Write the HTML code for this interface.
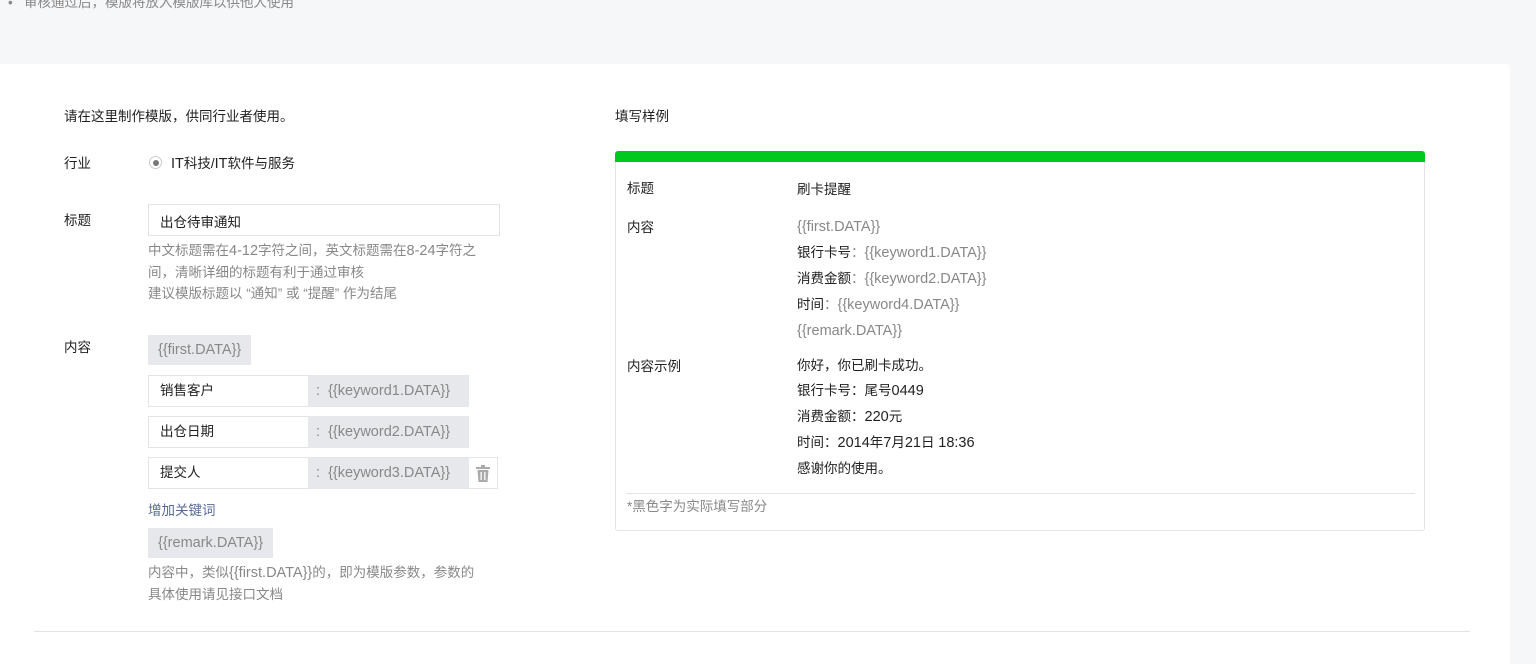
<!DOCTYPE html>
<html><head><meta charset="utf-8"><style>
*{margin:0;padding:0;box-sizing:border-box}
body{width:1536px;height:652px;background:#f6f7f9;font-family:"Liberation Sans","Noto Sans CJK SC",sans-serif;font-size:13.5px;color:#222;position:relative;overflow:hidden}
.a{position:absolute;white-space:nowrap}
.g{color:#888}
.L{font-size:14.5px}
.panel{position:absolute;left:0;top:64px;width:1510px;height:600px;background:#fff;border-radius:0 4px 0 0}
.box{position:absolute;border:1px solid #e4e4e4;background:#fff}
.tag{position:absolute;background:#e7e8eb;color:#888;padding:0 10px;height:30px;line-height:30px;font-size:14.5px}
.kw{position:absolute;left:148px;width:320px;height:32px;border:1px solid #e4e4e4;background:#fff}
.kw span.n{position:absolute;left:11px;top:0;line-height:30px;color:#222}
.kw span.v{position:absolute;left:159px;top:-1px;width:161px;height:32px;background:#e7e8eb;color:#888;line-height:32px;padding-left:8px;font-size:14.5px}
</style></head><body>
<div class="a g" style="left:8px;top:-9px">•&nbsp;&nbsp; 审核通过后，模版将放入模版库以供他人使用</div>
<div class="panel"></div>
<div class="a" style="left:64px;top:105px">请在这里制作模版，供同行业者使用。</div>
<div class="a" style="left:64px;top:152px">行业</div>
<div class="a" style="left:149px;top:156px;width:13px;height:13px;border:1px solid #ccc;border-radius:50%"><div style="position:absolute;left:2.5px;top:2.5px;width:6px;height:6px;border-radius:50%;background:#777"></div></div>
<div class="a" style="left:171px;top:152px"><span class="L">IT</span>科技/<span class="L">IT</span>软件与服务</div>
<div class="a" style="left:64px;top:209px">标题</div>
<div class="box" style="left:148px;top:204px;width:352px;height:32px"><span class="a" style="left:11px;top:6px">出仓待审通知</span></div>
<div class="a g" style="left:148px;top:240px;line-height:21px">中文标题需在<span class="L">4-12</span>字符之间，英文标题需在<span class="L">8-24</span>字符之<br>间，清晰详细的标题有利于通过审核<br>建议模版标题以 “通知” 或 “提醒” 作为结尾</div>
<div class="a" style="left:64px;top:336px">内容</div>
<div class="tag" style="left:148px;top:335px">{{first.DATA}}</div>
<div class="kw" style="top:375px"><span class="n">销售客户</span><span class="v">:&nbsp; {{keyword1.DATA}}</span></div>
<div class="kw" style="top:416px"><span class="n">出仓日期</span><span class="v">:&nbsp; {{keyword2.DATA}}</span></div>
<div class="kw" style="top:457px;width:350px"><span class="n">提交人</span><span class="v">:&nbsp; {{keyword3.DATA}}</span>
<svg style="position:absolute;left:326px;top:7px" width="16" height="17" viewBox="0 0 16 17"><rect x="1" y="2" width="14" height="2" fill="#aaa"/><rect x="6" y="0" width="4" height="2" fill="#aaa"/><path d="M2.5 5h11l-1 12h-9z" fill="#aaa"/><rect x="5.5" y="7" width="1.3" height="8" fill="#fff"/><rect x="9.2" y="7" width="1.3" height="8" fill="#fff"/></svg></div>
<div class="a" style="left:148px;top:499px;color:#576b95">增加关键词</div>
<div class="tag" style="left:148px;top:528px">{{remark.DATA}}</div>
<div class="a g" style="left:148px;top:562px;line-height:21px">内容中，类似<span class="L">{{first.DATA}}</span>的，即为模版参数，参数的<br>具体使用请见接口文档</div>
<div class="a" style="left:34px;top:631px;width:1436px;height:1px;background:#e4e4e4"></div>

<div class="a" style="left:615px;top:105px">填写样例</div>
<div class="box" style="left:615px;top:151px;width:810px;height:380px;border-radius:3px">
<div style="position:absolute;left:-1px;top:-1px;width:810px;height:11px;background:#00c91d;border-radius:3px 3px 0 0"></div>
</div>
<div class="a" style="left:627px;top:177px">标题</div>
<div class="a" style="left:797px;top:178px">刷卡提醒</div>
<div class="a" style="left:627px;top:216px">内容</div>
<div class="a" style="left:797px;top:214px;line-height:25px"><span class="g L">{{first.DATA}}</span><br>银行卡号<span class="g">：<span class="L">{{keyword1.DATA}}</span></span><br>消费金额<span class="g">：<span class="L">{{keyword2.DATA}}</span></span><br>时间<span class="g">：<span class="L">{{keyword4.DATA}}</span></span><br><span class="g L">{{remark.DATA}}</span></div>
<div class="a" style="left:627px;top:355px">内容示例</div>
<div class="a" style="left:797px;top:353px;line-height:25px">你好，你已刷卡成功。<br>银行卡号：尾号<span class="L">0449</span><br>消费金额：<span class="L">220</span>元<br>时间：<span class="L">2014</span>年<span class="L">7</span>月<span class="L">21</span>日 <span class="L">18:36</span><br>感谢你的使用。</div>
<div class="a" style="left:626px;top:493px;width:789px;height:1px;background:#e4e4e4"></div>
<div class="a g" style="left:627px;top:495px">*黑色字为实际填写部分</div>
</body></html>
